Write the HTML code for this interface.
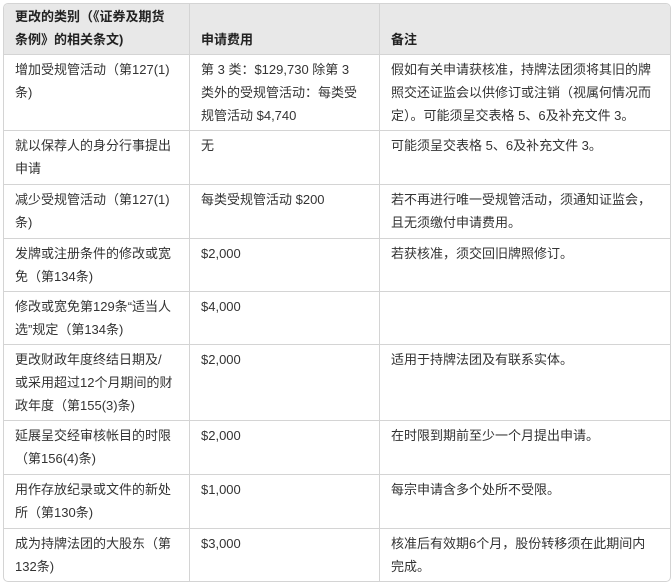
<!DOCTYPE html>
<html><head><meta charset="utf-8"><style>
html,body{margin:0;padding:0;background:#fff;width:672px;height:585px;overflow:hidden}
table{position:absolute;left:3px;top:3px;border-collapse:separate;border-spacing:0;table-layout:fixed;width:666px;
font-family:"Liberation Sans","Noto Sans CJK SC",sans-serif;font-size:13px;line-height:23px;color:#333;
border:1px solid #d4d4d4;border-radius:5px;overflow:hidden}
td,th{padding:3px 11px 0 11px;vertical-align:top;text-align:left;white-space:nowrap;border-right:1px solid #d4d4d4;border-bottom:1px solid #d4d4d4;overflow:hidden}
td:last-child,th:last-child{border-right:none}
tr:last-child td{border-bottom:none}
th{background:#e8e8e8;font-weight:bold;vertical-align:bottom;padding-top:1px;padding-bottom:3px;color:#222}
</style></head><body>
<table>
<colgroup><col style="width:186px"><col style="width:190px"><col style="width:290px"></colgroup>
<tr style="height:51px"><th>更改的类别（《证券及期货<br>条例》的相关条文)</th><th>申请费用</th><th>备注</th></tr>
<tr style="height:76px"><td>增加受规管活动（第127(1)<br>条)</td><td>第 3 类：$129,730 除第 3<br>类外的受规管活动：每类受<br>规管活动 $4,740</td><td>假如有关申请获核准，持牌法团须将其旧的牌<br>照交还证监会以供修订或注销（视属何情况而<br>定）。可能须呈交表格 5、6及补充文件 3。</td></tr>
<tr style="height:54px"><td>就以保荐人的身分行事提出<br>申请</td><td>无</td><td>可能须呈交表格 5、6及补充文件 3。</td></tr>
<tr style="height:54px"><td>减少受规管活动（第127(1)<br>条)</td><td>每类受规管活动 $200</td><td>若不再进行唯一受规管活动，须通知证监会，<br>且无须缴付申请费用。</td></tr>
<tr style="height:53px"><td>发牌或注册条件的修改或宽<br>免（第134条)</td><td>$2,000</td><td>若获核准，须交回旧牌照修订。</td></tr>
<tr style="height:53px"><td>修改或宽免第129条“适当人<br>选”规定（第134条)</td><td>$4,000</td><td></td></tr>
<tr style="height:76px"><td>更改财政年度终结日期及/<br>或采用超过12个月期间的财<br>政年度（第155(3)条)</td><td>$2,000</td><td>适用于持牌法团及有联系实体。</td></tr>
<tr style="height:54px"><td>延展呈交经审核帐目的时限<br>（第156(4)条)</td><td>$2,000</td><td>在时限到期前至少一个月提出申请。</td></tr>
<tr style="height:54px"><td>用作存放纪录或文件的新处<br>所（第130条)</td><td>$1,000</td><td>每宗申请含多个处所不受限。</td></tr>
<tr style="height:52px"><td>成为持牌法团的大股东（第<br>132条)</td><td>$3,000</td><td>核准后有效期6个月，股份转移须在此期间内<br>完成。</td></tr>
</table>
</body></html>
